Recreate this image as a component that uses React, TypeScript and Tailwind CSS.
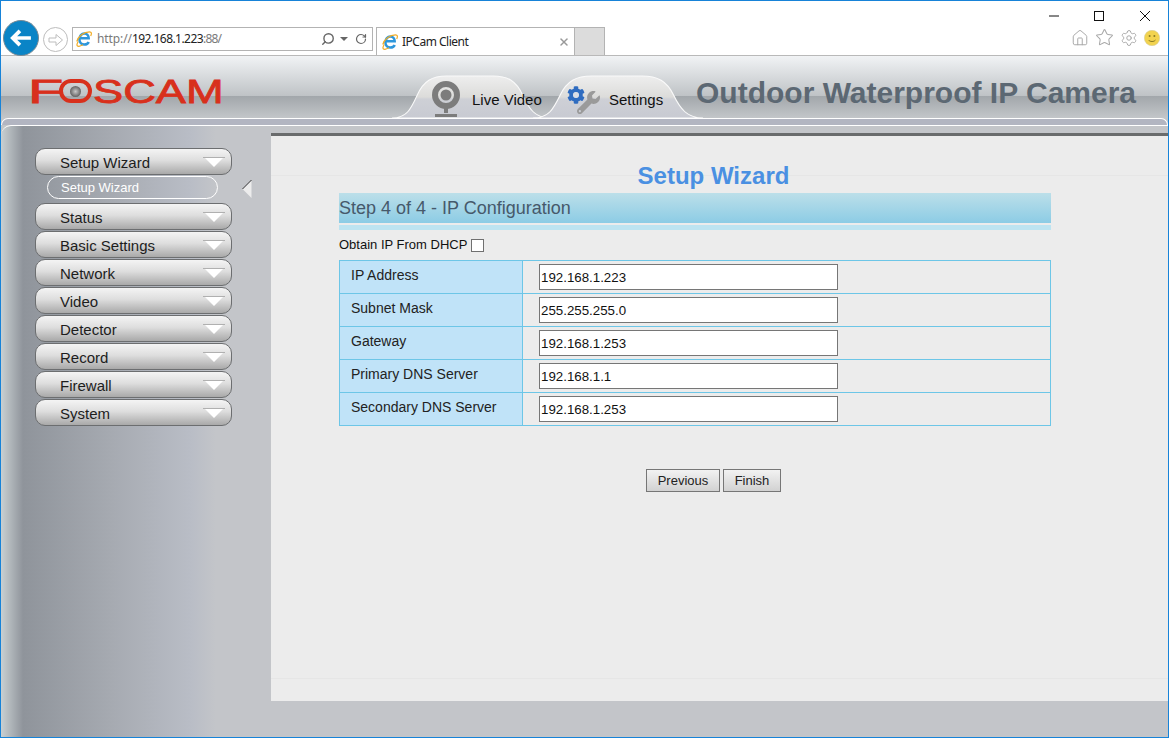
import { Search, RotateCw, X, Home, Star, Settings } from "lucide-react";
import { FaCog, FaWrench } from "react-icons/fa";

const menu = ["Status", "Basic Settings", "Network", "Video", "Detector", "Record", "Firewall", "System"];

const ipRows = [
  { label: "IP Address", value: "192.168.1.223" },
  { label: "Subnet Mask", value: "255.255.255.0" },
  { label: "Gateway", value: "192.168.1.253" },
  { label: "Primary DNS Server", value: "192.168.1.1" },
  { label: "Secondary DNS Server", value: "192.168.1.253" },
];

function IeIcon({ className }: { className?: string }) {
  return (
    <svg viewBox="0 0 16 16" className={className}>
      <path d="M4.200 7.300h8.500c0-3-1.900-4.800-4.300-4.800C5.700 2.500 3.400 5 3.400 8.200s2.100 5.300 5 5.300c2 0 3.600-.9 4.300-2.600" fill="none" stroke="#2e97dc" strokeWidth="2.500" />
      <path d="M.8 10.500C2 5.500 8 .8 13.500.8c2.200 0 2.300 1.700 1.200 4.200" fill="none" stroke="#f2ac24" strokeWidth="1.200" />
      <path d="M2.200 10.500c-1.800 3-1.800 5 .8 4.800 1.200-.1 2.500-.7 4-1.500" fill="none" stroke="#f2ac24" strokeWidth="1.200" />
    </svg>
  );
}

function MenuButton({ label }: { label: string }) {
  return (
    <div className="w-[197px] h-[27px] shrink-0 flex items-center justify-between pl-6 pr-[6px] rounded-[10px] border border-[#6c6e70] bg-[linear-gradient(180deg,#f4f4f4_0%,#dedede_45%,#a9a9a9_100%)] text-[15px] text-[#1d1d1d]">
      <span className="pt-[4px]">{label}</span>
      <span className="flex flex-col items-center w-[22px]">
        <span className="w-[22px] h-px bg-[#b0b0b0]" />
        <span className="w-0 h-0 border-x-[9px] border-x-transparent border-t-[9px] border-t-white" />
      </span>
    </div>
  );
}

function TabShape() {
  return (
    <svg viewBox="0 0 150 43" preserveAspectRatio="none" className="absolute inset-0 w-full h-full">
      <defs>
        <linearGradient id="tabFill" x1="0" y1="0" x2="0" y2="1">
          <stop offset="0" stopColor="#eeeeee" />
          <stop offset="0.5" stopColor="#dcdcda" />
          <stop offset="0.55" stopColor="#ced0d6" />
          <stop offset="1" stopColor="#c8cad2" />
        </linearGradient>
      </defs>
      <path d="M0 43C14 43 18 34 24 20 30 6 38 1 52 1h44c14 0 22 5 28 19 6 14 12 23 26 23Z" fill="url(#tabFill)" stroke="#fafafa" strokeWidth="1" />
    </svg>
  );
}

export default function App() {
  return (
    <div className="w-[1169px] h-[738px] flex flex-col overflow-hidden border border-[#1783d8] bg-white font-['Liberation_Sans',Arial,sans-serif]">
      {/* browser chrome */}
      <div className="h-[55px] shrink-0 flex flex-col border-b border-[#b9b9b9] bg-white">
        <div className="h-[26px] shrink-0 flex justify-end items-center pt-[2px]">
          <svg viewBox="0 0 10 10" className="w-[10px] h-[10px] mr-[35px] mt-[1px]">
            <path d="M0 5h10" stroke="#111" strokeWidth="1" />
          </svg>
          <svg viewBox="0 0 10 10" className="w-[10px] h-[10px] mr-[36px] mt-[1px]">
            <rect x=".5" y=".5" width="9" height="9" fill="none" stroke="#111" />
          </svg>
          <svg viewBox="0 0 10 10" className="w-[10px] h-[10px] mr-[18px] mt-[1px]">
            <path d="M0 0l10 10M10 0L0 10" stroke="#111" strokeWidth="1" />
          </svg>
        </div>
        <div className="flex-1 flex items-start pl-[2px]">
          <div className="w-9 h-9 -mt-[7px] shrink-0 rounded-full bg-[#0a84c6] border border-[#7a8a94] flex items-center justify-center">
            <svg viewBox="0 0 20 16" className="w-[22px] h-[18px]">
              <path d="M9 1.500 2.500 8 9 14.500M3 8h16" fill="none" stroke="#fff" strokeWidth="3.400" />
            </svg>
          </div>
          <div className="w-[25px] h-[25px] ml-[4px] shrink-0 rounded-full border border-[#bdbdbd] flex items-center justify-center">
            <svg viewBox="0 0 16 14" className="w-[16px] h-[14px]">
              <path d="M1 5h7V1.500L14.500 7 8 12.500V9H1Z" fill="none" stroke="#bdbdbd" />
            </svg>
          </div>
          <div className="w-[301px] h-[24px] ml-[4px] shrink-0 flex items-center border border-[#b3b3b3] pl-[3px] pr-[5px]">
            <IeIcon className="w-4 h-4 shrink-0" />
            <span className="ml-[5px] text-[12px] font-['Noto_Sans',sans-serif] text-[#7a7a7a] tracking-[-0.1px]">
              http://<span className="text-[#222] tracking-[-0.55px]">192.168.1.223</span><span className="tracking-[-0.8px]">:88/</span>
            </span>
            <Search className="w-[14px] h-[14px] ml-auto text-[#666] -scale-x-100" strokeWidth={2.4} />
            <span className="ml-[5px] w-0 h-0 border-x-[4px] border-x-transparent border-t-[4px] border-t-[#666]" />
            <RotateCw className="w-3 h-3 ml-[7px] text-[#666]" strokeWidth={2.4} />
          </div>
          <div className="w-[199px] h-[28px] ml-[3px] shrink-0 flex items-center border-x border-t border-[#b3b3b3] pl-[5px] pr-[4px]">
            <IeIcon className="w-4 h-4 shrink-0" />
            <span className="ml-[4px] text-[12px] font-['Noto_Sans',sans-serif] text-[#222] tracking-[-0.5px]">IPCam Client</span>
            <X className="w-3 h-3 ml-auto text-[#999]" strokeWidth={3} />
          </div>
          <div className="w-[30px] h-[28px] shrink-0 border-r border-t border-[#b3b3b3] bg-[#dcdcdc]" />
          <div className="ml-auto flex items-center mt-[1px] mr-[8px] gap-[6px] text-[#a8a8a8]">
            <Home className="w-[18px] h-[18px]" strokeWidth={1.3} />
            <Star className="w-[19px] h-[19px]" strokeWidth={1.3} />
            <Settings className="w-[18px] h-[18px]" strokeWidth={1.3} />
            <svg viewBox="0 0 16 16" className="w-4 h-4">
              <circle cx="8" cy="8" r="7.700" fill="#f2d34f" stroke="#cfc9a0" strokeWidth=".5" />
              <circle cx="5.600" cy="6" r="1" fill="#8a7a22" />
              <circle cx="10.400" cy="6" r="1" fill="#8a7a22" />
              <path d="M4.500 10c1.500 2 5.500 2 7 0" fill="none" stroke="#8a7a22" />
            </svg>
          </div>
        </div>
      </div>

      {/* camera page header */}
      <div className="h-[62px] shrink-0 flex items-end pl-[27px] bg-[linear-gradient(180deg,#f1f3f5_0%,#bfc3c6_64%,#a2a7ab_65%,#c3c6c9_100%)]">
        <div className="w-[197px] h-[26px] mb-[14px] shrink-0 flex items-center text-[#d8301c] leading-none [-webkit-text-stroke:0.8px_#d8301c]">
          <span className="text-[33px] scale-x-[1.75] origin-left w-[31px]">F</span>
          <span className="w-[33px] h-[24px] shrink-0 rounded-full border-[4px] border-[#d8301c] flex items-center justify-center">
            <span className="w-[11px] h-[11px] rounded-full bg-[radial-gradient(circle,#c8c8c8_0%,#555_80%)]" />
          </span>
          <span className="text-[33px] scale-x-[1.37] origin-left ml-[1px]">SCAM</span>
        </div>
        <div className="ml-[167px] relative w-[158px] h-[43px] shrink-0 flex items-center pl-[39px]">
          <TabShape />
          <svg viewBox="0 0 30 36" className="relative w-[30px] h-[36px] mt-[5px]">
            <circle cx="15" cy="14" r="11" fill="none" stroke="#7c7c7c" strokeWidth="6" />
            <circle cx="15" cy="14" r="5.500" fill="#7c7c7c" />
            <path d="M15 25v7" stroke="#7c7c7c" strokeWidth="4" />
            <path d="M4 33h22v3H4Z" fill="#7c7c7c" />
          </svg>
          <span className="relative ml-[11px] mt-[8px] text-[15px] text-[#111]">Live Video</span>
        </div>
        <div className="-ml-[17px] relative w-[170px] h-[43px] shrink-0 flex items-center pl-[34px]">
          <TabShape />
          <span className="relative w-[33px] h-[28px] mt-[7px] shrink-0">
            <FaCog className="absolute left-0 top-0 w-[18px] h-[18px] text-[#2f6cc0]" />
            <span className="absolute left-[6px] top-[6px] w-[6px] h-[6px] rounded-full bg-[#d9dde6]" />
            <FaWrench className="absolute right-0 bottom-0 w-[23px] h-[23px] text-[#9a9a9a]" />
          </span>
          <span className="relative ml-[9px] mt-[8px] text-[15px] text-[#111]">Settings</span>
        </div>
        <div className="relative ml-[-7px] pb-[7px] text-[30px] leading-[36px] font-bold text-[#5c6873] whitespace-nowrap">
          Outdoor Waterproof IP Camera
        </div>
      </div>

      {/* page body */}
      <div className="flex-1 min-h-0 flex flex-col bg-[#c2c5c8]">
        <div className="h-[7px] shrink-0 rounded-t-[14px] border-x border-t border-white bg-[#b2b5c1]" />
        <div className="flex-1 min-h-0 flex rounded-tl-[10px] border-t border-white bg-[linear-gradient(90deg,#c9d0d2_0px,#8f949b_22px,#a6aab1_110px,#b9bdc6_190px,#c3c5c9_215px)]">
          <div className="w-[270px] shrink-0 flex flex-col pl-[34px] pt-[22px]">
            <MenuButton label="Setup Wizard" />
            <div className="flex items-start h-[28px] shrink-0 pt-[1px]">
              <div className="ml-[12px] w-[171px] h-[23px] rounded-[12px] border border-white flex items-center pl-[13px] text-[13px] text-white">
                Setup Wizard
              </div>
              <svg viewBox="0 0 10 18" className="w-[10px] h-[18px] ml-[24px] mt-[4px]">
                <path d="M9.500 0v18L.5 9Z" fill="#ececec" />
                <path d="M9.500 0 .5 9" fill="none" stroke="#333" strokeWidth="1" />
              </svg>
            </div>
            <div className="flex flex-col gap-px">
              {menu.map((m) => (
                <MenuButton key={m} label={m} />
              ))}
            </div>
          </div>

          <div className="flex-1 min-w-0 mt-[7px] mb-[36px] flex flex-col border-t-[3px] border-[#696b6c] bg-[#ececec]">
            <div className="h-[34px] mt-[6px] shrink-0 border-b border-[#e6e6e6]">
              <h1 className="text-center pr-[12px] text-[24px] leading-[28px] pt-[20px] font-bold text-[#4a90e2]">Setup Wizard</h1>
            </div>
            <div className="mt-[17px] ml-[68px] w-[712px] flex-1 flex flex-col">
              <div className="h-[30px] shrink-0 pt-[1px] text-[18px] leading-[28px] text-[#46596b] bg-[linear-gradient(180deg,#bcdfe9_0%,#8ccce5_100%)]">
                Step 4 of 4 - IP Configuration
              </div>
              <div className="h-[5px] mt-[2px] shrink-0 bg-[#bde4f1]" />
              <label className="h-[30px] shrink-0 flex items-center gap-[4px] text-[13px] text-[#111]">
                Obtain IP From DHCP
                <span className="w-[13px] h-[13px] border border-[#707070] bg-white" />
              </label>
              <table className="w-[712px] border-collapse text-[14px] text-[#222]">
                <tbody>
                  {ipRows.map((r) => (
                    <tr key={r.label} className="h-[33px]">
                      <td className="w-[183px] border border-[#6dc6e7] bg-[#c0e3f8] pl-[11px] pb-[3px] text-[14px]">{r.label}</td>
                      <td className="border border-[#6dc6e7] pl-[16px]">
                        <input
                          readOnly
                          value={r.value}
                          className="block w-[299px] h-[26px] border border-[#767676] bg-white px-[1px] pt-[1px] text-[13.300px] text-[#111] outline-none"
                        />
                      </td>
                    </tr>
                  ))}
                </tbody>
              </table>
              <div className="mt-[43px] flex justify-center gap-[3px] pl-[37px]">
                <button className="w-[74px] h-[23px] border border-[#767676] bg-[linear-gradient(180deg,#f2f2f2,#d2d2d2)] text-[13px] text-[#222]">Previous</button>
                <button className="w-[58px] h-[23px] border border-[#767676] bg-[linear-gradient(180deg,#f2f2f2,#d2d2d2)] text-[13px] text-[#222]">Finish</button>
              </div>
            </div>
            <div className="h-[23px] shrink-0 border-t border-[#e6e6e6]" />
          </div>
        </div>
      </div>
    </div>
  );
}
